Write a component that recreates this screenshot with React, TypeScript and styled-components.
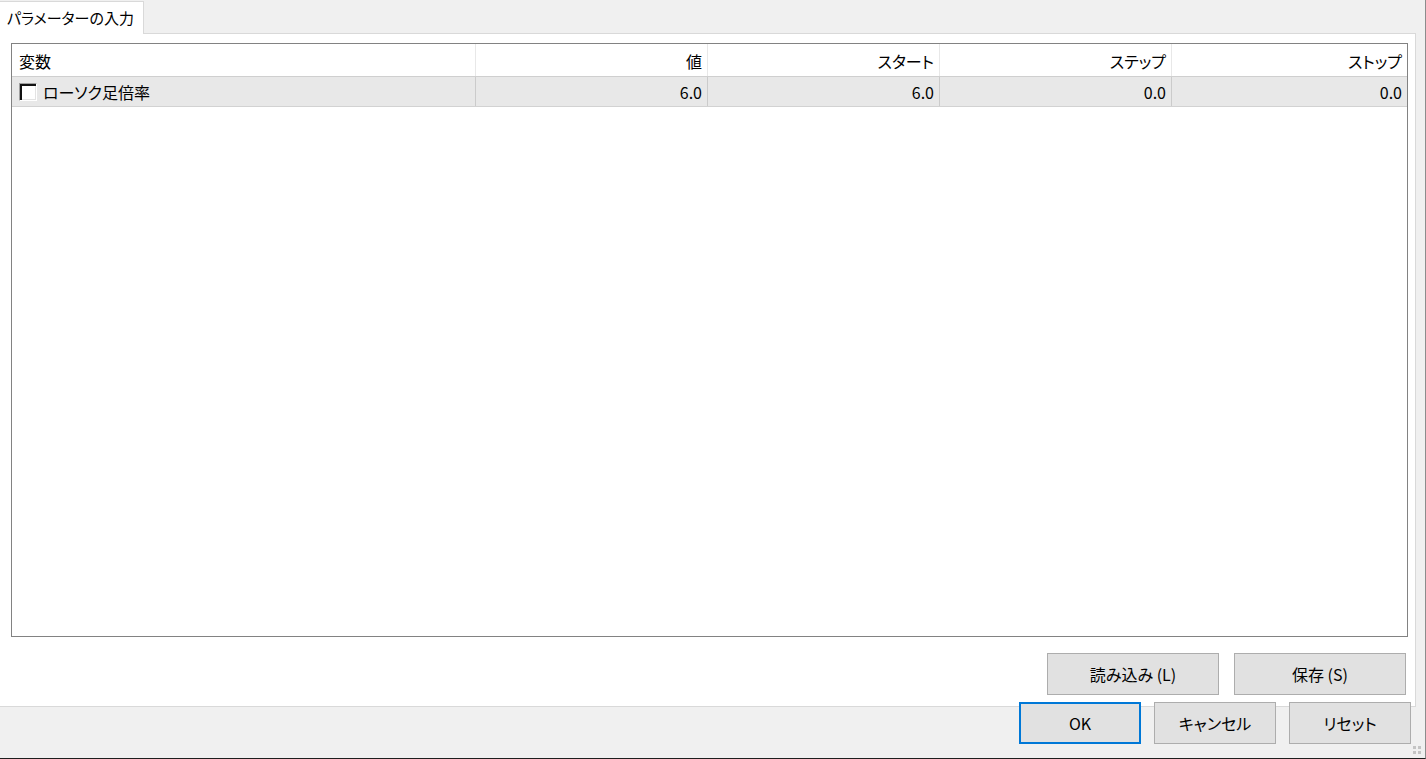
import React from "react";
import styled, { createGlobalStyle } from "styled-components";

const Global = createGlobalStyle`
  html, body { margin: 0; padding: 0; background: #f0f0f0; }
  body {
    font-family: "Noto Sans CJK JP", "Noto Sans", sans-serif;
    font-feature-settings: "palt";
    color: #000;
  }
`;

const Window = styled.div`
  position: relative;
  width: 1426px;
  height: 759px;
  box-sizing: border-box;
  background: #f0f0f0;
  border-right: 1px solid #8c8c8c;
  border-bottom: 1px solid #1e1e1e;
  display: flex;
  flex-direction: column;
  overflow: hidden;
`;

const TabStrip = styled.div`
  width: 1416px;
  height: 34px;
  display: flex;
  align-items: flex-end;
`;

const Tab = styled.div`
  box-sizing: border-box;
  height: 33px;
  padding: 0 9px 2px 7px;
  background: #fff;
  border-top: 1px solid #d9d9d9;
  border-right: 1px solid #d9d9d9;
  display: flex;
  align-items: center;
  font-size: 15px;
  line-height: 1;
`;

const TabFiller = styled.div`
  flex: 1;
  height: 1px;
  background: #d9d9d9;
`;

const Panel = styled.div`
  box-sizing: border-box;
  width: 1416px;
  height: 673px;
  background: #fff;
  border-right: 1px solid #d9d9d9;
  border-bottom: 1px solid #d9d9d9;
  padding: 9px 7px 0 11px;
  display: flex;
  flex-direction: column;
`;

const Table = styled.div`
  box-sizing: border-box;
  height: 594px;
  border: 1px solid #828282;
  background: #fff;
  display: flex;
  flex-direction: column;
`;

const Row = styled.div<{ $header?: boolean }>`
  display: grid;
  grid-template-columns: 464px 232px 232px 232px 1fr;
  height: ${(p) => (p.$header ? 32 : 29)}px;
  background: ${(p) => (p.$header ? "#fff" : "#e8e8e8")};
  border-bottom: 1px solid ${(p) => (p.$header ? "#cfcfcf" : "#d2d2d2")};
`;

const Cell = styled.div<{ $header?: boolean; $first?: boolean; $last?: boolean }>`
  display: flex;
  align-items: center;
  justify-content: ${(p) => (p.$first ? "flex-start" : "flex-end")};
  padding: ${(p) => (p.$first ? "0 0 0 7px" : "0 5px 0 0")};
  padding-top: ${(p) => (p.$header ? 2 : 1)}px;
  border-right: ${(p) =>
    p.$last ? "none" : `1px solid ${p.$header ? "#e8e8e8" : "#cbcbcb"}`};
  font-size: 16px;
  line-height: 1;
  gap: 6px;
  white-space: nowrap;
`;

const Check = styled.span`
  box-sizing: border-box;
  width: 18px;
  height: 18px;
  background: #fff;
  border-top: 1px solid #a0a0a0;
  border-left: 1px solid #a0a0a0;
  border-right: 1px solid #fff;
  border-bottom: 1px solid #fff;
  box-shadow: inset 2px 2px 0 #111, inset -1px -1px 0 #e3e3e3;
  margin-top: -1px;
`;

const ActionRow = styled.div`
  display: flex;
  justify-content: flex-end;
  gap: 15px;
  margin-top: 16px;
  padding-right: 2px;
`;

const Button = styled.button<{ $w: number; $h: number; $default?: boolean }>`
  box-sizing: border-box;
  width: ${(p) => p.$w}px;
  height: ${(p) => p.$h}px;
  background: #e1e1e1;
  border: ${(p) => (p.$default ? "2px solid #0078d7" : "1px solid #adadad")};
  font-family: "Noto Sans CJK JP", "Noto Sans", sans-serif;
  font-feature-settings: "palt";
  font-size: 16px;
  color: #000;
  padding: 0;
  display: flex;
  align-items: center;
  justify-content: center;
`;

const Footer = styled.div`
  display: flex;
  justify-content: flex-end;
  gap: 13px;
  margin-top: -5px;
  padding-right: 14px;
`;

const Grip = styled.svg`
  position: absolute;
  right: 3px;
  bottom: 3px;
`;

const cols = ["変数", "値", "スタート", "ステップ", "ストップ"];
const vals = ["6.0", "6.0", "0.0", "0.0"];

export default function App() {
  return (
    <>
      <Global />
      <Window>
        <TabStrip>
          <Tab>パラメーターの入力</Tab>
          <TabFiller />
        </TabStrip>
        <Panel>
          <Table>
            <Row $header>
              {cols.map((c, i) => (
                <Cell key={c} $header $first={i === 0} $last={i === cols.length - 1}>
                  {c}
                </Cell>
              ))}
            </Row>
            <Row>
              <Cell $first>
                <Check />
                <span>ローソク足倍率</span>
              </Cell>
              {vals.map((v, i) => (
                <Cell key={i} $last={i === vals.length - 1}>
                  {v}
                </Cell>
              ))}
            </Row>
          </Table>
          <ActionRow>
            <Button $w={172} $h={42}>読み込み (L)</Button>
            <Button $w={172} $h={42}>保存 (S)</Button>
          </ActionRow>
        </Panel>
        <Footer>
          <Button $w={122} $h={42} $default>OK</Button>
          <Button $w={122} $h={42}>キャンセル</Button>
          <Button $w={122} $h={42}>リセット</Button>
        </Footer>
        <Grip width="9" height="9" viewBox="0 0 9 9">
          <rect x="0" y="0" width="3" height="3" fill="#c4c4c4" />
          <rect x="5" y="0" width="3" height="3" fill="#c4c4c4" />
          <rect x="0" y="5" width="3" height="3" fill="#c4c4c4" />
          <rect x="5" y="5" width="3" height="3" fill="#c4c4c4" />
        </Grip>
      </Window>
    </>
  );
}
